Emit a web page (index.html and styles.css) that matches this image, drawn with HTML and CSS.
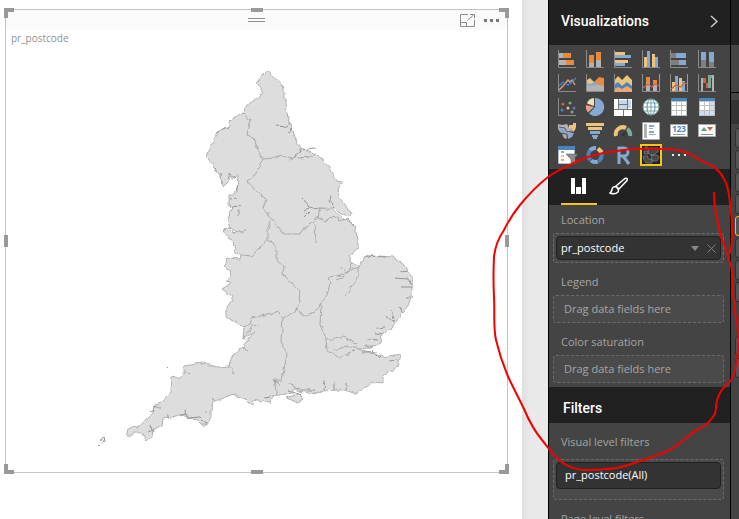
FILE: index.html
```html
<!DOCTYPE html>
<html lang="en">
<head>
<meta charset="utf-8">
<title>Report editor</title>
<link rel="stylesheet" href="styles.css">
</head>
<body>
<div class="app">
  <main class="report">
    <div class="page">
      <section class="visual">
        <header class="visual-bar">
          <svg class="grip" viewBox="0 0 17 6" aria-hidden="true"><path d="M0 1.5h17M0 4.5h17" stroke="#8c8c8c"/></svg>
          <div class="visual-actions">
            <button type="button" aria-label="Focus mode"><svg width="15" height="13" viewBox="0 0 15 13" fill="none" stroke="#8c8c8c"><path d="M8 .5H.5v12h14V6M.5 8.500h6v4M7.500 6.500 13.500 1M10 .5h4.500v4"/></svg></button>
            <button type="button" aria-label="More options"><svg width="16" height="3" viewBox="0 0 16 3" fill="#777"><path d="M0 0h3v3H0zM6 0h3v3H6zM12 0h3v3h-3z"/></svg></button>
          </div>
        </header>
        <h1 class="visual-title">pr_postcode</h1>
        <svg class="map" viewBox="6 46 501 426" role="img" aria-label="Map of England by region">
          <defs><filter id="coast" x="0" y="0" width="100%" height="100%" color-interpolation-filters="sRGB"><feTurbulence type="fractalNoise" baseFrequency=".2" numOctaves="1" seed="4"/><feDisplacementMap in="SourceGraphic" scale="5" xChannelSelector="R" yChannelSelector="G"/></filter></defs>
          <g filter="url(#coast)" stroke-linejoin="round">
            <path class="land" d="M267 70L273 77 277 80 282 84 284 93 286 102 287 113 291 125 293 131 296 140 301 148 314 153 323 159 332 173 337 181 342 182 338 188 339 197 347 207 351 214 350 217 343 214 335 208 318 208 334 210 345 220 352 222 355 229 358 240 358 248 348 257 353 263 360 266 365 256 380 256 393 257 402 263 408 270 412 278 412 295 407 308 397 320 390 330 382 333 381 343 370 348 357 349 372 352 382 357 401 354 398 367 383 376 383 383 373 382 355 394 340 390 323 391 315 394 300 391 295 389 287 394 278 395 271 398 270 403 252 400 253 407 247 400 235 394 228 396 213 402 211 410 211 417 207 425 202 425 197 420 187 418 180 415 163 419 162 425 153 430 152 437 146 440 142 432 135 432 128 437 127 430 133 426 138 428 152 413 155 405 162 403 171 391 172 377 178 379 184 375 184 366 202 363 217 367 229 366 232 356 242 347 255 331 243 340 244 327 240 326 233 321 227 317 227 307 232 300 232 296 222 289 231 283 226 282 232 272 225 267 227 258 240 259 241 255 236 252 233 243 223 230 229 228 235 234 246 230 236 233 231 227 230 228 227 218 233 208 229 206 229 195 237 192 238 175 233 179 229 173 228 182 223 187 221 177 214 167 207 157 211 145 217 132 230 126 230 121 243 112 247 105 259 97 262 92 257 82 265 73Z"/>
            <path class="land" d="M286 398L294 395 300 395 304 399 298 403 294 401Z"/>
            <path class="border" d="M243 112L250 120 246 135 254 138 258 151 263 159 275 158 281 155 290 159 297 156 300 149M297 158L313 157 315 153M263 159L257 169 256 174 247 181 256 191 266 199 263 209 272 219 268 228 268 240 259 248 252 256 241 255M272 219L284 234 300 234 310 223 318 218 325 221 334 215 339 221 348 219 354 225M315 224L316 243M318 218L320 208M268 240L276 246 276 259 284 266 283 274 300 292 298 309 302 317 315 312 321 303 327 296 330 283 328 277 343 275 352 269 360 267M298 309L283 319 278 311 265 315 252 318 250 324 243 327M283 319L281 341 287 354 282 380 274 380 277 395M321 303L320 325 326 338 327 350 339 357 352 353 357 348M327 340L343 336 356 344M333 350L346 347 356 347M353 263L347 273 341 266M358 267L358 278 346 296M336 280L347 276M242 347L248 351M230 366L234 374M251 326L259 325M243 340L252 327"/>
            <path class="inlet" d="M277 126L285 127 291 123M287 132L293 129M315 148L300 150 294 158M302 199L309 207 318 209M304 211L309 208M304 218L310 212M331 195L330 201 334 207M217 133L224 128 229 127M215 167L218 170 214 171M222 184L221 174M230 180L230 173 236 178M236 191L238 184M231 199L236 198M232 208L242 206M238 209L238 215M365 256L386 257M401 272L408 271M395 278L408 279 411 284M402 287L413 287M405 297L410 297M391 311L394 319M400 307L403 314M386 317L394 321M377 328L385 327M375 333L382 334M368 339L378 340M364 346L372 346M363 352L378 352M372 350L380 358M389 361L398 360M289 383L299 389M300 390L315 390M325 380L324 390M334 381L334 390M346 383L346 391M287 390L302 395M264 397L271 396M272 379L281 386M211 397L215 401M205 411L210 414M207 424L200 417 187 418 186 409M180 415L187 414M168 415L168 419M150 412L156 407 161 407M151 425L154 432M148 433L153 431M185 372L191 374"/>
            <path class="inlet" d="M101 444L105 441 104 438 100 440M101 446L98 447M166 367L167 368"/>
          </g>
        </svg>
        <span class="handle top-left"></span><span class="handle top"></span><span class="handle top-right"></span>
        <span class="handle left"></span><span class="handle right"></span>
        <span class="handle bottom-left"></span><span class="handle bottom"></span><span class="handle bottom-right"></span>
      </section>
    </div>
  </main>

  <aside class="panel">
    <header class="panel-head">
      <h2>Visualizations</h2>
      <button type="button" aria-label="Collapse pane"><svg width="8" height="13" viewBox="0 0 8 13" fill="none" stroke="#ccc" stroke-width="1.500"><path d="M1 1l6 5.500L1 12"/></svg></button>
    </header>
    <div class="gallery">
      <button type="button" aria-label="Stacked bar chart"><svg viewBox="0 0 18 18"><path class="axis" d="M.5 0v17.500H18"/><path fill="#b3b3b3" d="M1 3h4v5H1zM1 10h7v5H1z"/><path fill="#e88a3e" d="M5 3h8v5H5zM8 10h8v5H8z"/></svg></button>
      <button type="button" aria-label="Stacked column chart"><svg viewBox="0 0 18 18"><path class="axis" d="M.5 0v17.500H18"/><path fill="#b3b3b3" d="M3 13h5v4H3zM10 10h5v7h-5z"/><path fill="#e88a3e" d="M3 5h5v8H3zM10 2h5v8h-5z"/></svg></button>
      <button type="button" aria-label="Clustered bar chart"><svg viewBox="0 0 18 18"><path class="axis" d="M.5 0v17.500H18"/><path fill="#edc47d" d="M1 2h10v3H1zM1 10h13v3H1z"/><path fill="#86a9d2" d="M1 5h16v3H1zM1 13h10v3H1z"/></svg></button>
      <button type="button" aria-label="Clustered column chart"><svg viewBox="0 0 18 18"><path class="axis" d="M.5 0v17.500H18"/><path fill="#edc47d" d="M2 7h3v10H2zM10 4h3v13h-3z"/><path fill="#86a9d2" d="M5 1h3v16H5zM13 7h3v10h-3z"/></svg></button>
      <button type="button" aria-label="100% stacked bar chart"><svg viewBox="0 0 18 18"><path class="axis" d="M.5 0v17.500H18"/><path fill="#808080" d="M1 3h6v5H1zM1 10h8v5H1z"/><path fill="#86a9d2" d="M6 3h10v5H6zM9 10h7v5H9z"/></svg></button>
      <button type="button" aria-label="100% stacked column chart"><svg viewBox="0 0 18 18"><path class="axis" d="M.5 0v17.500H18"/><path fill="#808080" d="M3 10h5v7H3zM11 12h5v5h-5z"/><path fill="#86a9d2" d="M3 2h5v8H3zM11 2h5v10h-5z"/></svg></button>

      <button type="button" aria-label="Line chart"><svg viewBox="0 0 18 18"><path class="axis" d="M.5 0v17.500H18"/><path fill="none" stroke="#e3a08d" stroke-width="1.300" d="M1 16l4-4 5-6 2 2 2-2 3 5"/><path fill="none" stroke="#4b83bd" stroke-width="1.300" d="M1 12l4-4 5 3 3-2 5-5"/></svg></button>
      <button type="button" aria-label="Area chart"><svg viewBox="0 0 18 18"><path class="axis" d="M.5 0v17.500H18"/><path fill="#edc47d" d="M1 6l3-2 6 6v4H1z"/><path fill="#e88a3e" d="M8 8l5-5 5 1v10H8z"/><path fill="#b3b3b3" d="M1 10l4 2 5-2 8 2v5H1z"/><path fill="#86a9d2" d="M1 9l3 1 5-2 3 3-7 1-4-1z"/></svg></button>
      <button type="button" aria-label="Stacked area chart"><svg viewBox="0 0 18 18"><path fill="#edc47d" d="M0 7l4-5 4 4 5-5 5 5v9H0z"/><path fill="#4b83bd" d="M0 11l4-3 4 4 5-4 5 4v5H0z"/><path fill="#f0a66e" d="M0 15l4-2 4 2 5-3 5 3v3H0z"/><path class="axis" d="M.5 0v17.500"/></svg></button>
      <button type="button" aria-label="Line and stacked column chart"><svg viewBox="0 0 18 18"><path class="axis" d="M.5 0v17.500H18"/><path fill="#b3b3b3" d="M4 8h4v9H4zM11 9h4v8h-4z"/><path fill="#e88a3e" d="M4 3h4v6H4zM11 6h4v5h-4zM17 0h1v18h-1z"/><path fill="none" stroke="#d9603f" stroke-width="1.300" d="M1 14l5-4 4 3 3-3 4 2"/></svg></button>
      <button type="button" aria-label="Line and clustered column chart"><svg viewBox="0 0 18 18"><path class="axis" d="M.5 0v17.500H18"/><path fill="#edc47d" d="M2 8h3v9H2zM9 4h3v13H9z"/><path fill="#86a9d2" d="M5 2h3v15H5zM12 7h3v10h-3z"/><path fill="#e88a3e" d="M17 0h1v18h-1z"/><path fill="none" stroke="#d9603f" stroke-width="1.300" d="M1 15l5-4 5 2 3-4 3 1"/></svg></button>
      <button type="button" aria-label="Ribbon chart"><svg viewBox="0 0 18 18"><path class="axis" d="M.5 0v17.500H18"/><path fill="#b3b3b3" d="M3 4h2v13H3zM14 1h2v16h-2z"/><path fill="#d9603f" d="M5 4h3v5h3v5H8V9H5z"/><path fill="#7bab96" d="M10 1h4v3h-1v10h-3z"/></svg></button>

      <button type="button" aria-label="Scatter chart"><svg viewBox="0 0 18 18"><path class="axis" d="M.5 0v17.500H18"/><g><circle cx="5" cy="6" r="1.500" fill="#d9603f"/><circle cx="12" cy="5" r="1.500" fill="#7bab96"/><circle cx="4" cy="12" r="1.500" fill="#4b83bd"/><circle cx="10" cy="10" r="1.500" fill="#edc47d"/><circle cx="16" cy="10" r="1.500" fill="#4b83bd"/><circle cx="14" cy="14" r="1.500" fill="#999"/></g></svg></button>
      <button type="button" aria-label="Pie chart"><svg viewBox="0 0 18 18"><path fill="#86a9d2" d="M9 9V0a9 9 0 1 1-6 15.500z"/><path fill="#e6a08b" d="M8 9l-6 5.500A9 9 0 0 1 0 7z"/><path fill="#f3dfb8" d="M8 8L1 5.500A8 8 0 0 1 8 0z"/></svg></button>
      <button type="button" aria-label="Treemap"><svg viewBox="0 0 18 18"><path fill="#fff" d="M0 1h18v17H0z"/><path fill="#c6d9ec" d="M5 2h8v5H5zM14 2h3v8h-3zM5 7h8v4H5z"/><path fill="none" stroke="#777" d="M4.500 1v10M0 11.500h18M9.500 11.500V18M13.500 1v10M4.500 6.500h9"/></svg></button>
      <button type="button" aria-label="Map"><svg viewBox="0 0 18 18"><circle cx="9" cy="9" r="8" fill="#fff" stroke="#6f9f93"/><path fill="none" stroke="#7aaba0" d="M9 1v16M1 9h16M2.500 5h13M2.500 13h13"/><ellipse cx="9" cy="9" rx="4" ry="8" fill="none" stroke="#5f8fba"/></svg></button>
      <button type="button" aria-label="Table"><svg viewBox="0 0 18 18"><path fill="#bfbfbf" d="M1 0h16v18H1z"/><path fill="#4b83bd" d="M1 0h16v3H1z"/><path fill="#fff" d="M2 4h4v3H2zM7 4h4v3H7zM12 4h4v3h-4zM2 8h4v4H2zM7 8h4v4H7zM12 8h4v4h-4zM2 13h4v4H2zM7 13h4v4H7zM12 13h4v4h-4z"/></svg></button>
      <button type="button" aria-label="Matrix"><svg viewBox="0 0 18 18"><path fill="#bfbfbf" d="M1 0h16v18H1z"/><path fill="#4b83bd" d="M1 0h16v3H1z"/><path fill="#fff" d="M2 4h4v3H2zM7 4h4v3H7zM2 8h4v4H2zM7 8h4v4H7z"/><path fill="#cfdeef" d="M12 4h4v3h-4zM12 8h4v4h-4zM2 13h4v4H2zM7 13h4v4H7zM12 13h4v4h-4z"/></svg></button>

      <button type="button" aria-label="Filled map"><svg viewBox="0 0 18 18"><path fill="#b3b3b3" d="M0 2l4 1 5-1 2 4 4-1v5l-4 1-2 2-4-1-3-2-2-3z"/><path fill="#86a9d2" d="M1 6l6 1 2 3-4 1-3-2zM9 11h7l-2 4-4 2z"/><path fill="#b3b3b3" d="M4 12l5 1v4l-3-1z"/><path fill="#edc47d" d="M11 3h4V1h3v4l-1 3-2 2-1-4h-3z"/><path fill="none" stroke="#444" stroke-width=".8" d="M1 5l6 1 2 4 6-1M3 11l6 1v5"/></svg></button>
      <button type="button" aria-label="Funnel"><svg viewBox="0 0 18 18"><path fill="#edc47d" d="M0 1h18v3H0zM2 5h14v3H2z"/><path fill="#86a9d2" d="M4 9h10v3H4zM6 13h6v2H6zM7 15h4v2H7z"/></svg></button>
      <button type="button" aria-label="Gauge"><svg viewBox="0 0 18 18"><path fill="none" stroke="#edc47d" stroke-width="4" d="M2 14a7 7 0 0 1 10-8"/><path fill="none" stroke="#7bab96" stroke-width="4" d="M13 7a7 7 0 0 1 3 7"/><path fill="#333" d="M7 13l6-5-3 7z"/></svg></button>
      <button type="button" aria-label="Multi-row card"><svg viewBox="0 0 18 18"><path fill="#fff" stroke="#aaa" d="M.5.5h17v17H.5z"/><path fill="#b3b3b3" d="M2 2h3v14H2z"/><path fill="#86a9d2" d="M7 3h5v2H7zM7 9h5v2H7z"/><path stroke="#aaa" d="M7 6.500h4M7 12.500h7"/></svg></button>
      <button type="button" aria-label="Card"><svg viewBox="0 0 18 18"><path fill="#fff" stroke="#aaa" d="M.5 2.500h17v12H.5z"/><text x="9" y="10" text-anchor="middle">123</text><path stroke="#999" d="M3 12.500h12"/></svg></button>
      <button type="button" aria-label="KPI"><svg viewBox="0 0 18 18"><path fill="#fff" stroke="#aaa" d="M.5 2.500h17v12H.5z"/><path fill="#5f9d83" d="M3 9l3-4 3 4z"/><path fill="#d9603f" d="M9 5h6l-3 4z"/><path stroke="#888" d="M3 12.500h12"/></svg></button>

      <button type="button" aria-label="Slicer"><svg viewBox="0 0 18 18"><path fill="#fff" stroke="#bbb" d="M.5.500h16v17H.5z"/><path fill="#4b83bd" d="M0 0h17v4H0z"/><path fill="#86a9d2" d="M3 5h3v2H3z"/><path fill="#edc47d" d="M3 9h3v2H3z"/><path fill="#e6a08b" d="M3 13h3v2H3z"/><path fill="#8c8c8c" stroke="#555" stroke-width=".5" d="M8 8h12l-4 5v4h-3v-4z"/></svg></button>
      <button type="button" aria-label="Donut chart"><svg viewBox="0 0 18 18" fill="none" stroke-width="4"><path stroke="#86a9d2" d="M4 4.500A7 7 0 0 1 10 2"/><path stroke="#edc47d" d="M12 2.500l4 4"/><path stroke="#4b83bd" d="M15.500 8a7 7 0 0 1-3 7"/><path stroke="#86a9d2" d="M12 15.500a7 7 0 0 1-7-1"/><path stroke="#4b83bd" d="M4.500 14A7 7 0 0 1 4 4.500"/></svg></button>
      <button type="button" aria-label="R script visual"><svg viewBox="0 0 18 18" fill="none" stroke="#86a9d2" stroke-width="3"><path d="M5 18V2h5a4 4 0 0 1 0 8H5M9 10l6 8"/></svg></button>
      <button type="button" aria-label="Shape map" class="selected"><svg viewBox="0 0 18 18"><path fill="#222" d="M0 0h18v18H0z"/><path fill="#484848" stroke="#858585" stroke-width=".7" d="M7 2h9v4l-2 1-2 2H8L6 7zM1 10h5v3h4v4H4l-2-3zM9 9h6l2 2-2 4h-5zM2 5h4v3H2zM3 1h3v2H3z"/></svg></button>
      <button type="button" aria-label="More visuals"><svg viewBox="0 0 18 18" fill="#eee"><path d="M2 8h2v2H2zM8 8h2v2H8zM14 8h2v2h-2z"/></svg></button>
    </div>
    <nav class="tabs">
      <button type="button" class="active" aria-label="Fields"><svg width="16" height="16" viewBox="0 0 16 16" fill="#fff"><path d="M0 0h4v16H0zM5 9h5v7H5zM11 0h4v16h-4z"/></svg></button>
      <button type="button" aria-label="Format"><svg width="20" height="18" viewBox="0 0 20 18" fill="none" stroke="#fff" stroke-width="1.500"><path d="M7 9L16 1.500q3-1 2 2L10 12zM6.500 9.500q-3 0-3.500 3-.5 2.500-2 3.500 5 2 8-1 1.500-3-2.500-5.500zM7 9l3 3"/></svg></button>
    </nav>
    <section class="fields">
      <div class="field">
        <h3>Location</h3>
        <div class="well">
          <div class="pill"><span>pr_postcode</span>
            <button type="button" aria-label="Field options"><svg width="8" height="5" viewBox="0 0 8 5" fill="#888"><path d="M0 0h8L4 5z"/></svg></button>
            <button type="button" aria-label="Remove field"><svg width="9" height="9" viewBox="0 0 9 9" stroke="#808080"><path d="M.5.500l8 8M8.500.500l-8 8"/></svg></button>
          </div>
        </div>
      </div>
      <div class="field"><h3>Legend</h3><div class="well empty">Drag data fields here</div></div>
      <div class="field"><h3>Color saturation</h3><div class="well empty">Drag data fields here</div></div>
    </section>
    <header class="filters-head"><h2>Filters</h2></header>
    <section class="fields filters">
      <div class="field">
        <h3>Visual level filters</h3>
        <div class="well tall"><div class="pill filter-pill"><span>pr_postcode(All)</span></div></div>
      </div>
      <div class="field"><h3>Page level filters</h3></div>
    </section>
  </aside>

  <aside class="next-pane" aria-label="Fields pane">
    <div class="next-head"></div><div class="next-search"></div><div class="next-table"></div>
    <ul>
      <li></li><li></li><li></li><li></li><li class="current"></li><li></li><li></li><li></li><li class="spaced"></li><li></li>
    </ul>
  </aside>

  <svg class="annotation" viewBox="0 0 739 519" aria-hidden="true"><path d="M714 193Q714 206 717 218C719 232 722 240 725 247Q729 259 732 270C733 280 732 290 734 301Q735 315 738 330 740 343 737 357 736 370 732 379C728 384 724 387 721 391Q716 400 716 407 716 413 713 417C709 423 701 429 695 431 687 437 678 446 668 451 658 455 647 459 637 462Q627 466 617 468 602 470 583 470 572 469 563 463C554 457 548 447 542 440Q532 428 524 409C518 396 512 386 507 374Q500 357 496 340C493 326 495 312 494 297Q493 277 494 257C495 246 500 236 504 230Q511 216 520 205 533 189 548 177C558 170 570 165 580 160Q595 154 610 152C627 149 646 148 663 149Q679 149 690 154C697 159 703 161 710 165Q720 170 724 179C729 187 729 196 730 203Q732 217 732 230 732 247 730 253"/></svg>
</div>
</body>
</html>
```

FILE: styles.css
```css
* { box-sizing: border-box; }
body { margin: 0; overflow: hidden; font: 11px/16px "Open Sans", "Noto Sans", sans-serif; color: #a6a6a6; }
h1, h2, h3, ul { margin: 0; padding: 0; font-weight: 400; }
button { display: grid; place-items: center; padding: 0; border: 0; background: none; font: inherit; }

.app { position: relative; display: flex; height: 100vh; overflow: hidden; }

.report { flex: 1; min-width: 0; padding-right: 26px; background: linear-gradient(to left, #e9e9e9 18px, #dfdfdf 26px); }
.page { height: 100%; padding: 9px 14px 0 5px; background: #fff; }
.visual { position: relative; border: 1px solid #c3c3c3; }
.visual-bar { display: grid; grid-template-columns: 1fr 17px 1fr; align-items: center; height: 20px; padding: 0 7px; background: #fafafa; }
.grip { grid-column: 2; width: 17px; height: 6px; }
.visual-actions { grid-column: 3; display: flex; justify-content: flex-end; gap: 9px; }
.visual-title { padding-left: 5px; font-size: 10px; line-height: 16px; color: #909090; }
.map { display: block; width: 100%; }
.land { fill: #ddd; stroke: #b0b0b0; }
.border { fill: none; stroke: #aaa; }
.inlet { fill: none; stroke: #949494; }

.handle { position: absolute; border: 0 solid #999; }
.top-left { top: -2px; left: -2px; width: 10px; height: 10px; border-width: 4px 0 0 4px; }
.top-right { top: -2px; right: -2px; width: 10px; height: 10px; border-width: 4px 4px 0 0; }
.bottom-left { bottom: -2px; left: -2px; width: 10px; height: 10px; border-width: 0 0 4px 4px; }
.bottom-right { bottom: -2px; right: -2px; width: 10px; height: 10px; border-width: 0 4px 4px 0; }
.top, .bottom { left: calc(50% - 6px); width: 12px; height: 4px; background: #999; }
.top { top: -2px; }
.bottom { bottom: -2px; }
.left, .right { top: calc(50% - 6px); width: 4px; height: 12px; background: #999; }
.left { left: -2px; }
.right { right: -2px; }

.panel { flex: 0 0 183px; border: solid #000; border-width: 0 1px; background: #444; }
.panel-head, .filters-head { display: flex; align-items: center; justify-content: space-between; padding: 0 12px; background: #212121; color: #fff; }
.panel-head { height: 45px; padding-bottom: 3px; }
.filters-head { height: 36px; padding: 6px 14px 0; }
h2 { font: 500 14px/20px Roboto, sans-serif; }

.gallery { display: grid; grid-template-columns: repeat(6, 28px); grid-auto-rows: 24px; padding: 2px 4px; }
.gallery button { place-self: center; width: 22px; height: 22px; }
.gallery svg { width: 18px; height: 18px; overflow: visible; }
.gallery .selected { border: 2px solid #f2c811; background: #222; }
.axis { fill: none; stroke: #8c8c8c; }
.gallery text { font: 700 8px "Open Sans", sans-serif; fill: #4b83bd; }

.tabs { display: flex; height: 36px; padding-left: 12px; gap: 4px; background: #212121; }
.tabs button { width: 36px; border-bottom: 2px solid transparent; }
.tabs .active { border-color: #f2c811; }

.fields { display: grid; gap: 6px; padding: 2px 6px 4px 4px; }
h3 { padding-left: 8px; font-size: 11px; line-height: 26px; }
.well { padding: 2px; border: 1px dashed #6b6b6b; border-radius: 3px; background: #4a4a4a; }
.empty { padding: 5px 10px; }
.tall { min-height: 41px; }
.pill { display: flex; align-items: center; gap: 8px; padding: 3px 4px; border: 1px solid #202020; border-radius: 4px; background: #333; color: #fff; }
.pill span { flex: 1; }
.filter-pill { padding: 4px 8px 5px; }
.filters { padding-top: 6px; }
.filters h3 { margin-bottom: 4px; }

.next-pane { flex: 0 0 8px; overflow: hidden; background: #444; }
.next-head { height: 45px; background: #212121; }
.next-search { height: 48px; border-bottom: 1px solid #000; }
.next-table { height: 24px; margin-top: 7px; background: #333; }
.next-pane ul { display: grid; gap: 2px; padding: 4px 0 0 4px; list-style: none; }
.next-pane li { width: 20px; height: 20px; border: 1px solid #303030; border-radius: 3px; background: #555; }
.next-pane .current { border-color: #f2c811; }
.next-pane .spaced { margin-top: 32px; }

.annotation { position: absolute; top: 0; right: 0; width: 739px; height: 519px; pointer-events: none; fill: none; stroke: #f40000; stroke-width: 2; stroke-linecap: round; }
```
